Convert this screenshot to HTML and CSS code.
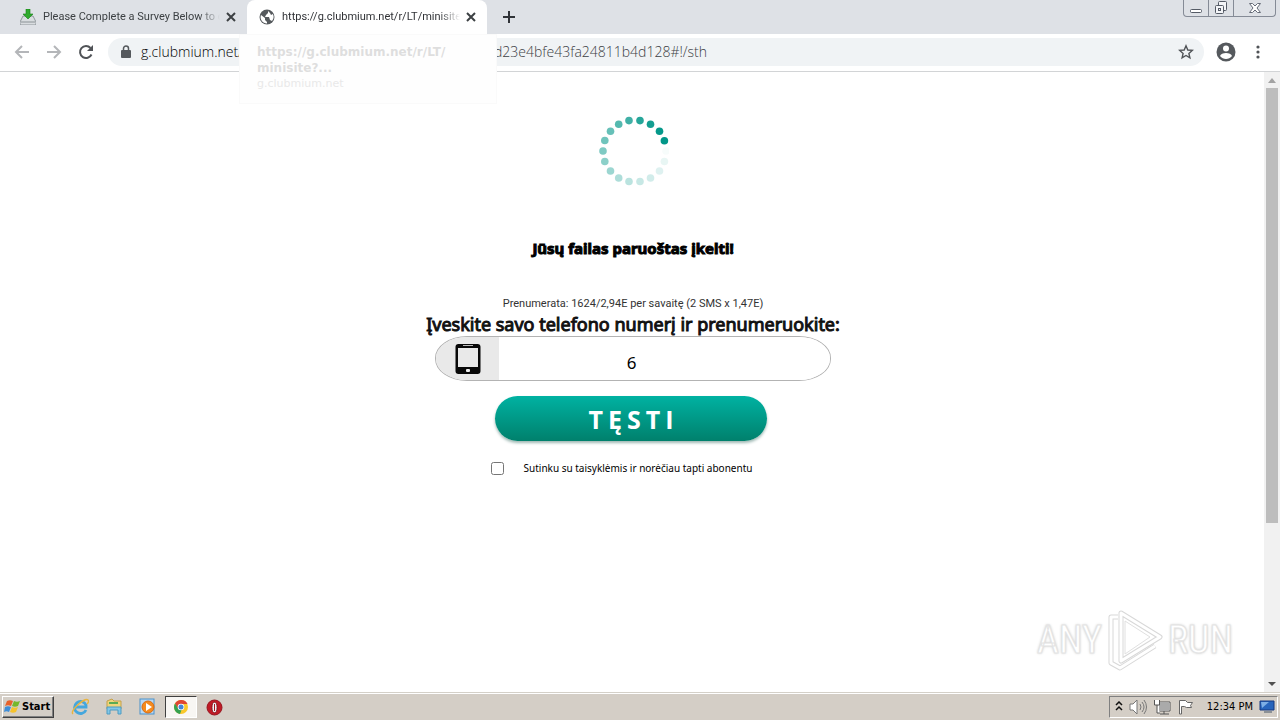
FILE: index.html
```
<!DOCTYPE html>
<html lang="lt">
<head>
<meta charset="utf-8">
<title>Prenumerata</title>
<link rel="stylesheet" href="styles.css">
</head>
<body>
<header class="tabstrip">
  <div class="tab">
    <svg class="tab-icon" viewBox="0 0 16 16"><path d="M3 7h10l3 6v3H0v-3z" fill="#d9dde0" stroke="#7c8489" stroke-width=".8"/><path d="M1 13h14" stroke="#8b9296"/><path d="M6 0h4v5h3l-5 5-5-5h3z" fill="#2faa2d" stroke="#168018" stroke-width=".6"/></svg>
    <span class="tab-title">Please Complete a Survey Below to c</span>
    <button class="icon-button tab-close" aria-label="Close tab"><svg width="10" height="10" viewBox="0 0 10 10"><path d="M1 1l8 8M9 1l-8 8" stroke="#3c4043" stroke-width="2"/></svg></button>
  </div>
  <div class="tab active">
    <svg class="tab-icon globe" viewBox="0 0 16 16"><circle cx="8" cy="8" r="7.500" fill="#55595d"/><path d="M2 6l4 3v2l2 2v1.500A6.300 6.300 0 0 1 2 6zM9 2v2L7 6 6 8h4l1 3 2 1a6.300 6.300 0 0 0 .8-7L12 6l-1-2z" fill="#fff"/></svg>
    <span class="tab-title">https://g.clubmium.net/r/LT/minisite?</span>
    <button class="icon-button tab-close" aria-label="Close tab"><svg width="10" height="10" viewBox="0 0 10 10"><path d="M1 1l8 8M9 1l-8 8" stroke="#3c4043" stroke-width="2"/></svg></button>
  </div>
  <button class="icon-button new-tab" aria-label="New tab"><svg width="12" height="12" viewBox="0 0 12 12"><path d="M6 0v12M0 6h12" stroke="#303338" stroke-width="2"/></svg></button>
  <div class="window-controls">
    <button aria-label="Minimize"><svg width="14" height="12" viewBox="0 0 14 12"><rect x="1.500" y="7.500" width="11" height="3" rx="1" fill="#fff" stroke="#555b66"/></svg></button>
    <button aria-label="Restore"><svg width="14" height="14" viewBox="0 0 14 14" fill="#f4f5f8" stroke="#555b66"><rect x="4.500" y=".5" width="8" height="9" rx="1"/><rect x="1.500" y="4.500" width="8" height="8" rx="1"/><rect x="4.500" y="7.500" width="2" height="2"/></svg></button>
    <button class="close" aria-label="Close"><svg width="14" height="12" viewBox="0 0 14 12"><path d="M1.500 1.500h3L7 4l2.500-2.500h3L9 6l3.500 4.500h-3L7 8l-2.500 2.500h-3L5 6z" fill="#fff" stroke="#666c78"/></svg></button>
  </div>
</header>
<nav class="toolbar">
  <button class="icon-button" aria-label="Back"><svg width="16" height="16" viewBox="0 0 16 16"><path d="M15 8H2M8 2L2 8l6 6" fill="none" stroke="#b4b6b9" stroke-width="2"/></svg></button>
  <button class="icon-button" aria-label="Forward"><svg width="16" height="16" viewBox="0 0 16 16"><path d="M1 8h13M8 2l6 6-6 6" fill="none" stroke="#b4b6b9" stroke-width="2"/></svg></button>
  <button class="icon-button" aria-label="Reload"><svg width="16" height="16" viewBox="0 0 16 16"><path d="M13.500 10.500A6 6 0 1 1 12.500 4" fill="none" stroke="#505357" stroke-width="2"/><path d="M15 1v6H9z" fill="#505357"/></svg></button>
  <div class="omnibox">
    <svg width="10" height="14" viewBox="0 0 10 14"><rect x="0" y="5" width="10" height="8" rx="1" fill="#55595d"/><path d="M2.500 6V3.500a2.500 2.500 0 0 1 5 0V6" fill="none" stroke="#55595d" stroke-width="1.500"/></svg>
    <div class="url"><span class="host">g.clubmium.net/</span><span class="path">d23e4bfe43fa24811b4d128#!/sth</span></div>
    <button class="icon-button" aria-label="Bookmark"><svg width="16" height="16" viewBox="0 0 16 16"><path d="M8 1.800l1.800 4.200 4.500.4-3.400 3 1 4.400L8 11.500l-3.900 2.300 1-4.400-3.400-3 4.500-.4z" fill="none" stroke="#505357" stroke-width="1.400"/></svg></button>
  </div>
  <button class="icon-button profile" aria-label="Profile"><svg width="20" height="20" viewBox="0 0 20 20"><circle cx="10" cy="10" r="9.500" fill="#55595d"/><circle cx="10" cy="6.500" r="3" fill="#fff"/><path d="M4 14c1-4 11-4 12 0-3 4-9 4-12 0z" fill="#fff"/></svg></button>
  <button class="icon-button menu" aria-label="Menu"><svg width="4" height="14" viewBox="0 0 4 14" fill="#505357"><circle cx="2" cy="2" r="1.600"/><circle cx="2" cy="7" r="1.600"/><circle cx="2" cy="12" r="1.600"/></svg></button>
</nav>
<aside class="tab-card"><strong>https://g.clubmium.net/r/LT/<br>minisite?...</strong><span>g.clubmium.net</span></aside>
<div class="viewport">
  <main class="page">
    <svg class="spinner" width="70" height="70" viewBox="-35 -35 70 70" fill="#009688">
      <circle cx="30.400" cy="-10.300" r="3.800"/><circle cx="25.500" cy="-19.800" r="3.800" opacity=".98"/><circle cx="16.500" cy="-26.800" r="3.800" opacity=".92"/><circle cx="6" cy="-30.400" r="3.800" opacity=".85"/><circle cx="-5" cy="-30.400" r="3.800" opacity=".75"/><circle cx="-15.300" cy="-26.800" r="3.800" opacity=".67"/><circle cx="-23.500" cy="-19.800" r="3.800" opacity=".6"/><circle cx="-29.200" cy="-10.500" r="3.800" opacity=".56"/><circle cx="-31" cy="0" r="3.800" opacity=".5"/><circle cx="-29.200" cy="10.500" r="3.800" opacity=".45"/><circle cx="-23.500" cy="20" r="3.800" opacity=".39"/><circle cx="-15.300" cy="27" r="3.800" opacity=".32"/><circle cx="-5" cy="30.500" r="3.800" opacity=".27"/><circle cx="6" cy="30.500" r="3.800" opacity=".22"/><circle cx="16.500" cy="27" r="3.800" opacity=".18"/><circle cx="25.500" cy="20" r="3.800" opacity=".13"/><circle cx="30.400" cy="10.500" r="3.800" opacity=".09"/><circle cx="32" cy="0" r="3.800" opacity=".03"/>
    </svg>
    <h1>Jūsų failas paruoštas įkelti!</h1>
    <p class="price">Prenumerata: 1624/2,94E per savaitę (2 SMS x 1,47E)</p>
    <form class="form">
      <label class="prompt" for="phone">Įveskite savo telefono numerį ir prenumeruokite:</label>
      <div class="phone">
        <span class="phone-icon"><svg width="26" height="32" viewBox="0 0 26 32"><rect x=".5" y="1" width="25" height="30" rx="3" fill="#090909"/><path d="M3 5h20v19H3z" fill="#e9e9e9"/><path d="M8 2.500h10" stroke="#bbb"/><rect x="11" y="26" width="4" height="3" rx="1" fill="#eee"/></svg></span>
        <input id="phone" type="text" value="6">
      </div>
      <button class="submit" type="button">TĘSTI</button>
      <label class="agree"><input type="checkbox"><span>Sutinku su taisyklėmis ir norėčiau tapti abonentu</span></label>
    </form>
  </main>
  <div class="scrollbar">
    <svg width="16" height="16" viewBox="0 0 16 16"><path d="M4 11l4-5 4 5z" fill="#a3a3a3"/></svg>
    <div class="track"><div class="thumb"></div></div>
    <svg width="16" height="16" viewBox="0 0 16 16"><path d="M4 6h8l-4 4z" fill="#505050"/></svg>
  </div>
  <div class="watermark"><span>ANY</span><svg width="58" height="64" viewBox="0 0 58 64" fill="none" stroke-linejoin="round"><g stroke="#d8d8d8" stroke-width="5"><path d="M15 5l39 24-39 24z"/><path d="M12 9H5v46l9 5 35-22"/></g><g stroke="#fff" stroke-width="3"><path d="M15 5l39 24-39 24z"/><path d="M12 9H5v46l9 5 35-22"/></g><path d="M19 13l25 16-25 17z" stroke="#e0e0e0"/></svg><span>RUN</span></div>
</div>
<footer class="taskbar">
  <button class="start"><svg width="17" height="16" viewBox="0 0 17 16"><path d="M3 2c2-1 4-1 6 0L7 7C5 6 3 6 1 7z" fill="#e8622b"/><path d="M10 2c2 1 4 1 6 0l-2 5c-2 1-4 1-6 0z" fill="#76b82a"/><path d="M1 8c2-1 4-1 6 0l-2 5c-2-1-3-1-5 0z" fill="#3f8ed8"/><path d="M8 8c2 1 4 1 6 0l-2 5c-2 1-4 1-6 0z" fill="#f6c32c"/></svg>Start</button>
  <div class="quick">
    <button aria-label="Internet Explorer"><svg width="18" height="18" viewBox="0 0 18 18" fill="none"><path d="M15 12a6 6 0 1 1 0-5v2H5" stroke="#45a7dd" stroke-width="2.800"/><path d="M2 16C-2 13 14-1 17 2c1 1 0 3-1 4" stroke="#e9b43f" stroke-width="1.400"/></svg></button>
    <button aria-label="Explorer"><svg width="18" height="18" viewBox="0 0 18 18"><path d="M2 3l5-2 2 2h7v8H2z" fill="#efd57a" stroke="#c5a04a"/><path d="M4 5h9" stroke="#5bab54" stroke-width="2"/><path d="M2 9h14v7h-3v-4H5v4H2z" fill="#83c7e7" stroke="#4d9bc2"/></svg></button>
    <button aria-label="Media Player"><svg width="18" height="18" viewBox="0 0 18 18"><rect x="1" y="1" width="14" height="15" fill="#b8d8f4" stroke="#4a91c9"/><circle cx="9" cy="9" r="6" fill="#f58b1e" stroke="#db6b10"/><path d="M7 5l6 4-6 4z" fill="#fff"/></svg></button>
    <button class="running" aria-label="Chrome"><svg width="16" height="16" viewBox="0 0 16 16"><circle cx="8" cy="8" r="7" fill="#f9c82c"/><path d="M2 4.500A7 7 0 0 1 14.500 5H8L5 10z" fill="#df4632"/><path d="M2 4.500L5.500 10l3 1-1.500 4A7 7 0 0 1 2 4.500z" fill="#35a150"/><circle cx="8" cy="8" r="3.300" fill="#fff"/><circle cx="8" cy="8" r="2.500" fill="#4285d8"/></svg></button>
    <button aria-label="Opera"><svg width="17" height="17" viewBox="0 0 17 17"><circle cx="8.500" cy="8.500" r="7.500" fill="#c01a25" stroke="#96141f"/><ellipse cx="8.500" cy="8.500" rx="2.500" ry="5.200" fill="#f4f4f4" stroke="#6e0e16" stroke-width=".8"/><path d="M8.500 5v7" stroke="#a31420"/></svg></button>
  </div>
  <div class="tray">
    <svg width="8" height="12" viewBox="0 0 8 12"><path d="M1 4l3-3 3 3M1 9l3-3 3 3" fill="none" stroke="#111" stroke-width="1.500"/></svg>
    <svg width="18" height="16" viewBox="0 0 18 16" fill="none" stroke="#777"><path d="M1 5h3l4-4v14l-4-4H1z" fill="#fff"/><path d="M11 5q2 3 0 6M13 3q4 5 0 10M15 1q5 7 0 14"/></svg>
    <svg width="18" height="16" viewBox="0 0 18 16" stroke="#555"><rect x="5.500" y="3.500" width="11" height="8" fill="#aaa" stroke="#fff"/><path d="M7 3h10v9H6M11 12v3M7 15h9" fill="none"/><path d="M1.500 1v5h5V1M4 6v8h3" fill="#fff"/></svg>
    <svg width="18" height="16" viewBox="0 0 18 16" fill="#fff" stroke="#666"><path d="M2.500 15V1.500h6l2 2h5l-2 3 1 2h-5l-2-1h-3V15z"/></svg>
    <time>12:34 PM</time>
    <svg width="16" height="14" viewBox="0 0 16 14"><path d="M1 1h14v9H1z" fill="#2865bc" stroke="#173b80"/><path d="M2 2h8L3 8z" fill="#7eafe5"/><path d="M5 12h8" stroke="#456"/></svg>
  </div>
</footer>
</body>
</html>
```
FILE: styles.css
```
* { box-sizing: border-box; }
body { margin: 0; height: 100vh; display: flex; flex-direction: column; background: #fff; overflow: hidden; font: 11px/16px "DejaVu Sans Condensed", "DejaVu Sans", sans-serif; color: #000; }
button { font: inherit; padding: 0; border: 0; background: none; color: inherit; }
svg { display: block; flex: none; }
h1, p { margin: 0; }
.icon-button { flex: none; display: grid; place-items: center; width: 16px; height: 16px; }

.tabstrip { display: flex; flex: none; height: 34px; background: #dee1e6; padding-left: 8px; }
.tab { display: flex; align-items: center; width: 239px; padding: 0 8px 0 12px; color: #3c4043; }
.tab.active { width: 240px; background: #fff; border-radius: 8px 8px 0 0; color: #303236; }
.tab-icon { width: 16px; height: 16px; margin-right: 7px; }
.tab-title { flex: 1; min-width: 0; overflow: hidden; white-space: nowrap; font-family: Roboto, "Noto Sans", sans-serif; mask-image: linear-gradient(90deg, #000 88%, transparent); }
.tab-close { margin-left: 3px; }
.new-tab { width: 28px; height: 34px; margin-left: 8px; }
.window-controls { display: flex; height: 17px; margin: 0 4px 0 auto; border: 1px solid #858b96; border-top: 0; border-radius: 0 0 4px 4px; }
.window-controls button { width: 25px; display: grid; place-items: center; border-right: 1px solid #858b96; }
.window-controls .close { width: 41px; border: 0; }

.toolbar { display: flex; align-items: center; gap: 16px; flex: none; height: 38px; padding: 0 20px 2px 14px; border-bottom: 1px solid #d2d4d6; background: #fff; }
.omnibox { flex: 1; display: flex; align-items: center; gap: 10px; min-width: 0; height: 28px; padding: 0 10px 0 13px; margin-left: -2px; border-radius: 14px; background: #f0f3f5; }
.url { flex: 1; display: flex; font: 300 14px/20px "Open Sans", sans-serif; color: #3c4044; white-space: nowrap; }
.host { width: 353px; color: #000; }
.profile { width: 20px; height: 20px; margin: 0 4px 0 -4px; }
.menu { width: 4px; }

.tab-card { position: absolute; top: 34px; left: 239px; width: 258px; padding: 9px 17px 11px; background: #fefefe; border: 1px solid #fafafa; color: #e9e9e9; font: 11px/16px "DejaVu Sans", sans-serif; }
.tab-card strong, .tab-card span { display: block; white-space: nowrap; }
.tab-card strong { color: #dedede; font-size: 12px; }

.viewport { position: relative; flex: 1; min-height: 0; display: flex; }
.page { flex: 1; display: flex; flex-direction: column; align-items: center; padding: 44px 0 0 2px; font-family: "Noto Sans", sans-serif; }
.spinner { margin-left: 2px; }
h1 { margin-top: 50px; font: bold 15px/24px "Noto Sans", sans-serif; -webkit-text-stroke: 1px #000; }
.price { margin-top: 35px; font: 11px/18px Roboto, "Noto Sans", sans-serif; color: #333; }
.form { display: flex; flex-direction: column; align-items: center; }
.prompt { font-size: 18px; line-height: 23px; color: #111; -webkit-text-stroke: 1px #111; white-space: nowrap; }
.phone { display: flex; width: 396px; height: 45px; border: 1px solid #b3b3b3; border-radius: 32px / 22px; overflow: hidden; }
.phone-icon { display: grid; place-items: center; width: 63px; background: #e9e9e9; }
.phone input { flex: 1; min-width: 0; border: 0; outline: 0; background: #fff; padding: 8px 66px 0 0; text-align: center; font: 17px/24px "Noto Sans", sans-serif; }
.submit { width: 272px; height: 45px; margin: 15px 4px 0 0; padding-left: 5px; border-radius: 23px; background: linear-gradient(#00b2a2, #00806c); box-shadow: 0 2px 3px #9fb9b4; color: #fff; font: bold 25px/44px "Open Sans", sans-serif; letter-spacing: 5px; }
.agree { display: flex; align-items: center; margin: 18px 23px 0 0; font-size: 10px; line-height: 18px; }
.agree input { width: 13px; height: 13px; margin: 0 20px 0 0; }

.scrollbar { display: flex; flex-direction: column; width: 16px; background: #f1f1f1; }
.track { flex: 1; padding: 0 2px; }
.thumb { height: 74%; background: #bdbdbd; }
.watermark { position: absolute; right: 47px; bottom: 20px; display: flex; align-items: center; gap: 4px; color: #fff; font: 38px/62px "Roboto Condensed", Roboto, sans-serif; text-shadow: 0 0 3px #bbb; -webkit-text-stroke: 1px #e4e4e4; }

.taskbar { flex: none; display: flex; align-items: center; height: 28px; padding: 1px 2px 0 2px; border-top: 1px solid #d4d0c8; background: #d4cec6; box-shadow: inset 0 1px #fff; }
.start { display: flex; align-items: center; gap: 1px; width: 52px; height: 22px; padding-left: 1px; border: 1px solid; border-color: #fff #404040 #404040 #fff; box-shadow: inset -1px -1px #808080; font-size: 11px; font-weight: bold; }
.quick { display: flex; margin-left: 9px; }
.quick button { display: grid; place-items: center; width: 34px; height: 22px; }
.quick .running { width: 32px; background: #f8f6f3; border: 1px solid; border-color: #404040 #fff #fff #404040; }
.tray { display: flex; align-items: center; gap: 6px; height: 22px; margin-left: auto; padding: 0 2px 0 5px; border: 1px solid; border-color: #808080 #fff #fff #808080; }
.tray time { margin-left: 6px; white-space: nowrap; }
```
